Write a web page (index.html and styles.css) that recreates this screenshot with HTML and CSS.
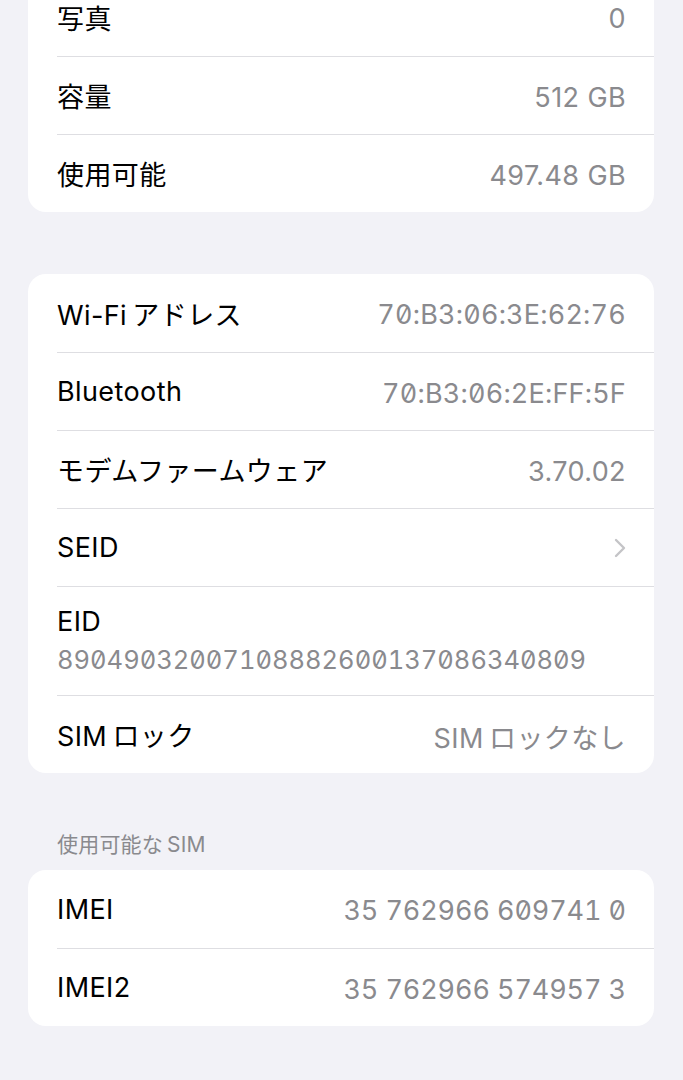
FILE: index.html
```html
<!DOCTYPE html>
<html lang="ja">
<head>
    <meta charset="UTF-8">
    <meta name="viewport" content="width=device-width, initial-scale=1.0">
    <title>情報</title>
    <link rel="stylesheet" href="styles.css">
</head>
<body>
    <div class="card first">
        <div class="row"><span>写真</span><span class="value">0</span></div>
        <div class="row"><span>容量</span><span class="value">512 GB</span></div>
        <div class="row"><span>使用可能</span><span class="value">497.48 GB</span></div>
    </div>

    <div class="card">
        <div class="row"><span>Wi-Fi&thinsp;アドレス</span><span class="value mono">70:B3:06:3E:62:76</span></div>
        <div class="row"><span>Bluetooth</span><span class="value mono">70:B3:06:2E:FF:5F</span></div>
        <div class="row"><span>モデムファームウェア</span><span class="value">3.70.02</span></div>
        <div class="row"><span>SEID</span>
            <svg class="chevron" width="14" height="22" viewBox="0 0 14 22">
                <path d="M3 3 L11 11 L3 19" fill="none" stroke="#c4c4c7" stroke-width="2.4" stroke-linecap="round" stroke-linejoin="round"/>
            </svg>
        </div>
        <div class="row tall">
            <span>EID</span>
            <span class="value mono eid">89049032007108882600137086340809</span>
        </div>
        <div class="row"><span>SIM&thinsp;ロック</span><span class="value">SIM&thinsp;ロックなし</span></div>
    </div>

    <p class="section-title">使用可能な&thinsp;SIM</p>
    <div class="card last">
        <div class="row"><span>IMEI</span><span class="value mono imei">35 762966 609741 0</span></div>
        <div class="row"><span>IMEI2</span><span class="value mono imei">35 762966 574957 3</span></div>
    </div>
</body>
</html>
```

FILE: styles.css
```css
* {
    box-sizing: border-box;
}
body {
    margin: 0;
    background-color: #f2f2f7;
    font-family: Inter, "Noto Sans CJK JP", sans-serif;
    font-size: 27px;
    letter-spacing: 0.4px;
    color: #000;
}
.card {
    background: white;
    border-radius: 18px;
    margin: 62px 29px 0 28px;
    overflow: hidden;
}
.card.first {
    margin-top: -22px;
}
.card.last {
    margin-top: 13px;
}
.row {
    height: 78px;
    margin-left: 29px;
    padding-right: 28px;
    display: flex;
    align-items: center;
    justify-content: space-between;
}
.row + .row {
    border-top: 1px solid #dedee2;
}
.row.tall {
    height: 109px;
    flex-direction: column;
    align-items: flex-start;
    justify-content: flex-start;
    padding-top: 19px;
    gap: 6px;
    line-height: 32px;
}
.value {
    color: #8a8a8e;
    padding-top: 3px;
}
.mono {
    font-feature-settings: "tnum", "zero";
    letter-spacing: 0.2px;
}
.imei {
    letter-spacing: -0.1px;
}
.eid {
    font-size: 25.5px;
    letter-spacing: 0;
    padding-top: 0;
}
.chevron {
    margin-right: -1px;
}
.section-title {
    margin: 60px 0 0 57px;
    font-size: 21px;
    line-height: 24px;
    letter-spacing: 0.2px;
    color: #8a8a8e;
}
```
